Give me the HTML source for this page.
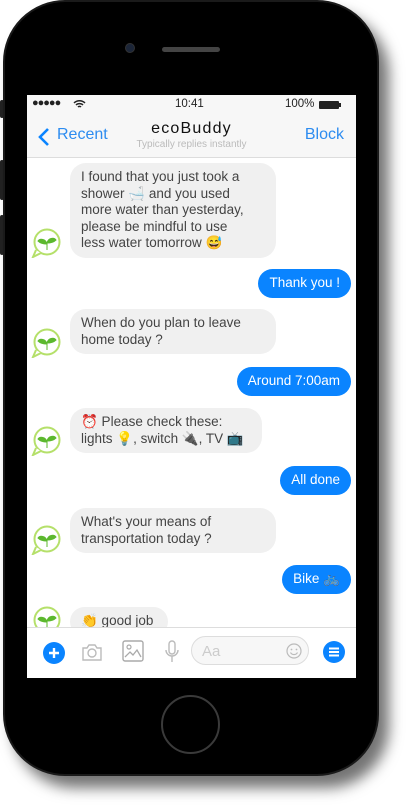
<!DOCTYPE html>
<html><head><meta charset="utf-8"><style>
*{margin:0;padding:0;box-sizing:border-box}
body{width:409px;height:805px;background:#fff;position:relative;overflow:hidden;font-family:"Liberation Sans","Noto Sans CJK SC",sans-serif}
.phone{position:absolute;left:3px;top:0;width:376px;height:776px;background:#000;border-radius:62px;box-shadow:10px 12px 14px rgba(0,0,0,.55);border:2px solid #1a1a1a}
.btn{position:absolute;left:0;width:4px;background:#222;border-radius:2px}
.screen{position:absolute;left:27px;top:95px;width:329px;height:583px;background:#fff;overflow:hidden}
.status{height:21px;background:#f7f7f7;font-size:11.5px;color:#222;position:relative}
.nav{height:42px;background:#f7f7f7;border-bottom:1px solid #ddd;position:relative}
.b{position:absolute;font-size:13.5px;line-height:16.5px;padding:6px 11px;border-radius:16px;white-space:nowrap}
.g{background:#f0f0f0;color:#444;left:43px}
.u{background:#0a84ff;color:#fff;right:5px;padding:6px 11px}
.av{position:absolute;left:4px;width:30px;height:30px}
.icon{position:absolute}
</style></head><body>
<div class="btn" style="top:100px;height:18px"></div>
<div class="btn" style="top:160px;height:40px"></div>
<div class="btn" style="top:215px;height:40px"></div>
<div class="phone"></div>
<div style="position:absolute;left:125px;top:43px;width:10px;height:10px;border-radius:50%;background:#1b2538;border:1px solid #333"></div>
<div style="position:absolute;left:162px;top:47px;width:58px;height:5px;border-radius:3px;background:#444"></div>
<div style="position:absolute;left:161px;top:695px;width:59px;height:59px;border-radius:50%;border:2px solid #3a3a3a"></div>
<div class="screen">
 <div class="status">
  <span style="position:absolute;left:5px;top:2px;font-size:11px;letter-spacing:-1px">●●●●●</span>
  <svg style="position:absolute;left:46px;top:4px" width="13" height="10" viewBox="0 0 13 10"><path d="M1 4a8 8 0 0 1 11 0M3 6a5 5 0 0 1 7 0M5 8a2 2 0 0 1 3 0" stroke="#222" stroke-width="1.5" fill="none"/></svg>
  <span style="position:absolute;left:148px;top:3px">10:41</span>
  <span style="position:absolute;left:258px;top:3px">100%</span>
  <div style="position:absolute;left:292px;top:6px;width:20px;height:8px;background:#222;border-radius:1px"></div>
  <div style="position:absolute;left:312px;top:8px;width:2px;height:4px;background:#222"></div>
 </div>
 <div class="nav">
  <svg style="position:absolute;left:11px;top:11px" width="12" height="20" viewBox="0 0 12 20"><path d="M10 2L2 10l8 8" stroke="#0a84ff" stroke-width="2.6" fill="none"/></svg>
  <span style="position:absolute;left:30px;top:10px;font-size:16px;color:#2d8cf0">Recent</span>
  <span style="position:absolute;left:0;right:0;top:4px;text-align:center;font-size:16px;letter-spacing:1.2px;color:#111">ecoBuddy</span>
  <span style="position:absolute;left:0;right:0;top:23px;text-align:center;font-size:10px;color:#bbb">Typically replies instantly</span>
  <span style="position:absolute;right:12px;top:10px;font-size:16px;color:#2d8cf0">Block</span>
 </div>
 <div class="b g" style="top:68px;width:206px">I found that you just took a<br>shower 🛁 and you used<br>more water than yesterday,<br>please be mindful to use<br>less water tomorrow 😅</div>
 <div class="b u" style="top:174px">Thank you !</div>
 <div class="b g" style="top:214px;width:206px">When do you plan to leave<br>home today ?</div>
 <div class="b u" style="top:272px">Around 7:00am</div>
 <div class="b g" style="top:313px;width:192px">⏰ Please check these:<br>lights 💡, switch 🔌, TV 📺</div>
 <div class="b u" style="top:371px">All done</div>
 <div class="b g" style="top:413px;width:206px">What's your means of<br>transportation today ?</div>
 <div class="b u" style="top:470px">Bike 🚲</div>
 <div class="b g" style="top:512px;width:98px">👏 good job</div>
 <svg class="av" style="top:133px" viewBox="0 0 30 30"><circle cx="16" cy="14" r="12.5" fill="#fff" stroke="#b5e06a" stroke-width="2"/><path d="M5 22L2 29l8-4" fill="#fff" stroke="#b5e06a" stroke-width="2"/><path d="M16 22V15M16 16c-1-5-7-6-9-3 3 3 7 3 9 3M16 15c1-5 7-6 9-3-3 3-7 3-9 3" fill="#5cb82e" stroke="#5cb82e" stroke-width="1"/></svg>
 <svg class="av" style="top:233px" viewBox="0 0 30 30"><circle cx="16" cy="14" r="12.5" fill="#fff" stroke="#b5e06a" stroke-width="2"/><path d="M5 22L2 29l8-4" fill="#fff" stroke="#b5e06a" stroke-width="2"/><path d="M16 22V15M16 16c-1-5-7-6-9-3 3 3 7 3 9 3M16 15c1-5 7-6 9-3-3 3-7 3-9 3" fill="#5cb82e" stroke="#5cb82e" stroke-width="1"/></svg>
 <svg class="av" style="top:331px" viewBox="0 0 30 30"><circle cx="16" cy="14" r="12.5" fill="#fff" stroke="#b5e06a" stroke-width="2"/><path d="M5 22L2 29l8-4" fill="#fff" stroke="#b5e06a" stroke-width="2"/><path d="M16 22V15M16 16c-1-5-7-6-9-3 3 3 7 3 9 3M16 15c1-5 7-6 9-3-3 3-7 3-9 3" fill="#5cb82e" stroke="#5cb82e" stroke-width="1"/></svg>
 <svg class="av" style="top:430px" viewBox="0 0 30 30"><circle cx="16" cy="14" r="12.5" fill="#fff" stroke="#b5e06a" stroke-width="2"/><path d="M5 22L2 29l8-4" fill="#fff" stroke="#b5e06a" stroke-width="2"/><path d="M16 22V15M16 16c-1-5-7-6-9-3 3 3 7 3 9 3M16 15c1-5 7-6 9-3-3 3-7 3-9 3" fill="#5cb82e" stroke="#5cb82e" stroke-width="1"/></svg>
 <svg class="av" style="top:511px" viewBox="0 0 30 30"><circle cx="16" cy="14" r="12.5" fill="#fff" stroke="#b5e06a" stroke-width="2"/><path d="M16 22V15M16 16c-1-5-7-6-9-3 3 3 7 3 9 3M16 15c1-5 7-6 9-3-3 3-7 3-9 3" fill="#5cb82e" stroke="#5cb82e" stroke-width="1"/></svg>
 <div style="position:absolute;left:0;top:532px;width:329px;height:51px;background:#fff;border-top:1px solid #ddd">
  <svg class="icon" style="left:16px;top:14px" width="22" height="22" viewBox="0 0 22 22"><circle cx="11" cy="11" r="11" fill="#0a84ff"/><path d="M11 6v10M6 11h10" stroke="#fff" stroke-width="2.4"/></svg>
  <svg class="icon" style="left:54px;top:14px" width="22" height="20" viewBox="0 0 22 20"><path d="M2 6h4l2-3h6l2 3h4v12H2z" fill="none" stroke="#bbb" stroke-width="1.4"/><circle cx="11" cy="11" r="4" fill="none" stroke="#bbb" stroke-width="1.4"/></svg>
  <svg class="icon" style="left:95px;top:12px" width="22" height="22" viewBox="0 0 22 22"><rect x="1" y="1" width="20" height="20" rx="2" fill="none" stroke="#aaa" stroke-width="1.4"/><circle cx="7" cy="7" r="2" fill="none" stroke="#aaa" stroke-width="1.2"/><path d="M3 17l5-5 3 3 4-5 4 7" fill="none" stroke="#aaa" stroke-width="1.3"/></svg>
  <svg class="icon" style="left:138px;top:12px" width="14" height="24" viewBox="0 0 14 24"><rect x="4" y="1" width="6" height="13" rx="3" fill="none" stroke="#bbb" stroke-width="1.4"/><path d="M1 10a6 6 0 0 0 12 0M7 16v6" fill="none" stroke="#bbb" stroke-width="1.4"/></svg>
  <div style="position:absolute;left:164px;top:8px;width:118px;height:29px;border:1px solid #ddd;border-radius:15px;background:#f7f7f7">
   <span style="position:absolute;left:10px;top:6px;font-size:15px;color:#ccc">Aa</span>
   <svg style="position:absolute;right:6px;top:6px" width="16" height="16" viewBox="0 0 16 16"><circle cx="8" cy="8" r="7" fill="none" stroke="#bbb" stroke-width="1.2"/><circle cx="5.5" cy="6.5" r=".9" fill="#bbb"/><circle cx="10.5" cy="6.5" r=".9" fill="#bbb"/><path d="M4.5 9.5a4 4 0 0 0 7 0" fill="none" stroke="#bbb" stroke-width="1.2"/></svg>
  </div>
  <svg class="icon" style="left:296px;top:13px" width="22" height="22" viewBox="0 0 22 22"><circle cx="11" cy="11" r="11" fill="#0a84ff"/><path d="M6 7.5h10M6 11h10M6 14.5h10" stroke="#fff" stroke-width="2"/></svg>
 </div>
</div>
</body></html>
